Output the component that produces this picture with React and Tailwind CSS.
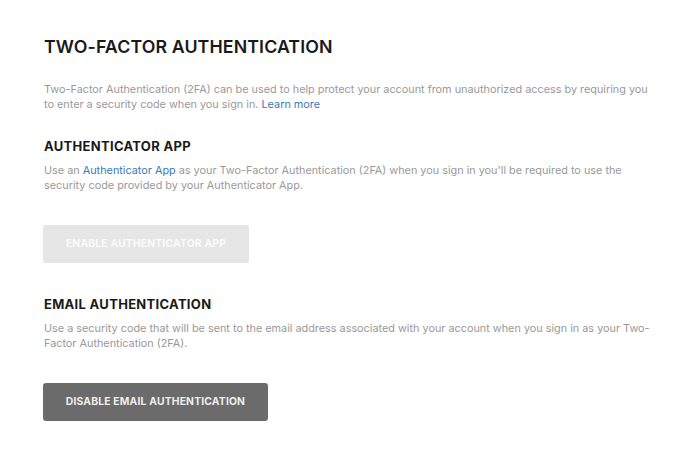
export default function App() {
  return (
    <div className="w-[696px] h-[459px] bg-white overflow-hidden" style={{ fontFamily: 'Inter, "Noto Sans", sans-serif' }}>
      <div className="pl-[44px] pt-[38px]">
        <h1 className="text-[17.8px] leading-[18px] font-semibold text-[#1a1a1a] tracking-[0.1px]">TWO-FACTOR AUTHENTICATION</h1>
        <p className="mt-[26px] text-[10.85px] leading-[15px] text-[#999999]">
          Two-Factor Authentication (2FA) can be used to help protect your account from unauthorized access by requiring you
          <br />
          to enter a security code when you sign in. <span className="text-[#3a78b8]">Learn more</span>
        </p>
        <h2 className="mt-[26px] text-[13px] leading-[16px] font-bold text-[#1a1a1a] tracking-[0.3px]">AUTHENTICATOR APP</h2>
        <p className="mt-[9px] text-[10.85px] leading-[15px] text-[#999999]">
          Use an <span className="text-[#3a78b8]">Authenticator App</span> as your Two-Factor Authentication (2FA) when you sign in you'll be required to use the
          <br />
          security code provided by your Authenticator App.
        </p>
        <button className="mt-[32px] -ml-px w-[206px] h-[38px] rounded-[2px] bg-[#e6e6e6] text-[#fafafa] text-[10.3px] font-bold tracking-[0.2px]">
          ENABLE AUTHENTICATOR APP
        </button>
        <h2 className="mt-[33px] text-[13px] leading-[16px] font-bold text-[#1a1a1a] tracking-[0.3px]">EMAIL AUTHENTICATION</h2>
        <p className="mt-[9px] text-[10.85px] leading-[15px] text-[#999999]">
          Use a security code that will be sent to the email address associated with your account when you sign in as your Two-
          <br />
          Factor Authentication (2FA).
        </p>
        <button className="mt-[32px] -ml-px w-[225px] h-[38px] rounded-[3px] bg-[#6b6b6b] text-[#eeeeee] text-[10.3px] font-bold tracking-[0.2px]">
          DISABLE EMAIL AUTHENTICATION
        </button>
      </div>
    </div>
  );
}
